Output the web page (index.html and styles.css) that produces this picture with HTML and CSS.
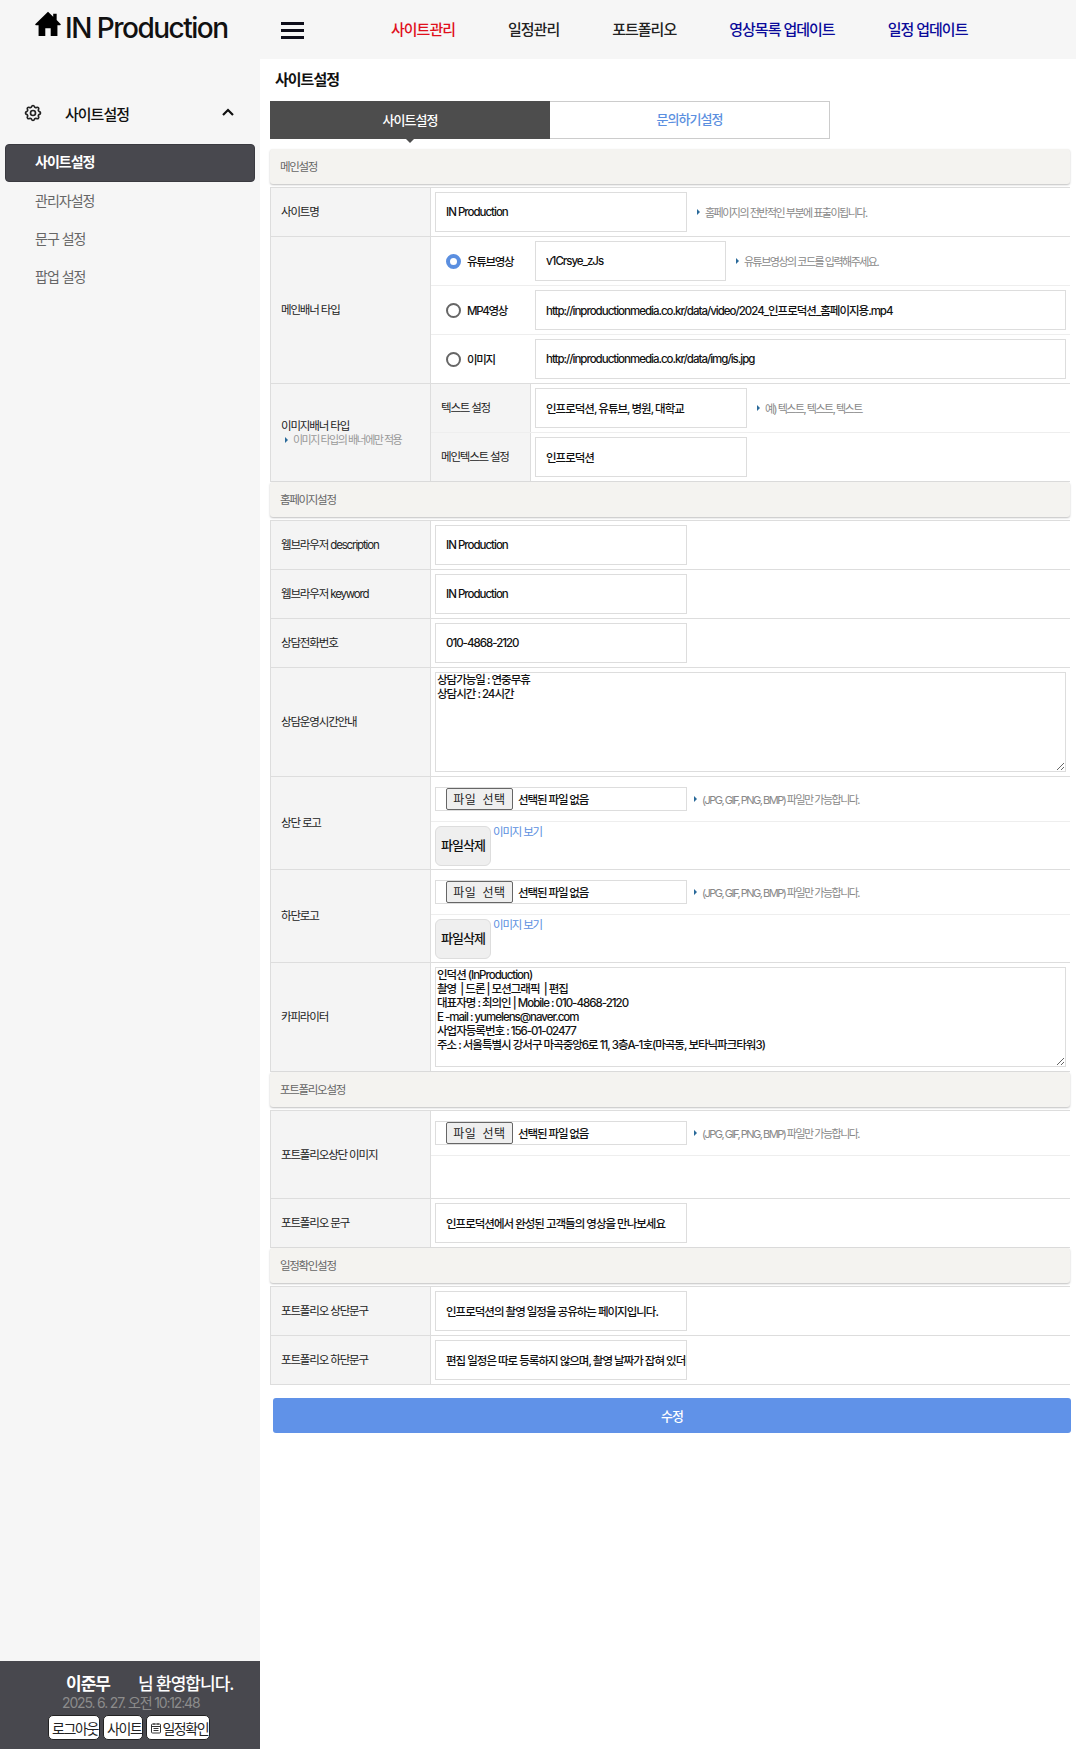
FILE: index.html
```html
<!DOCTYPE html>
<html lang="ko">
<head>
<meta charset="utf-8">
<title>사이트설정</title>
<link rel="stylesheet" href="styles.css">
</head>
<body>
<div class="app">
  <header class="topbar">
    <a class="logo">
      <svg class="logo-icon" viewBox="0 0 24 24"><path d="M12 .8.4 11.900c-.5.6-.1 1.300.6 1.300h2.300V23h6.200v-7h5v7h6.200v-9.800H23c.7 0 1.100-.7.600-1.300L20 8.400V2.500h-3.200v2.900z"/></svg>
      <span>IN Production</span>
    </a>
    <div class="burger"><i></i><i></i><i></i></div>
    <nav class="gnb">
      <a class="red">사이트관리</a>
      <a>일정관리</a>
      <a>포트폴리오</a>
      <a class="navy">영상목록 업데이트</a>
      <a class="navy">일정 업데이트</a>
    </nav>
  </header>
  <div class="body">
    <aside class="sidebar">
      <div class="side-head">
        <svg class="gear" viewBox="0 0 24 24" fill="none" stroke="#222" stroke-width="2"><path d="M10.325 4.317c.426-1.756 2.924-1.756 3.350 0a1.724 1.724 0 0 0 2.573 1.066c1.543-.94 3.310.826 2.370 2.370a1.724 1.724 0 0 0 1.065 2.572c1.756.426 1.756 2.924 0 3.350a1.724 1.724 0 0 0-1.066 2.573c.94 1.543-.826 3.310-2.370 2.370a1.724 1.724 0 0 0-2.572 1.065c-.426 1.756-2.924 1.756-3.350 0a1.724 1.724 0 0 0-2.573-1.066c-1.543.94-3.310-.826-2.370-2.370a1.724 1.724 0 0 0-1.065-2.572c-1.756-.426-1.756-2.924 0-3.350a1.724 1.724 0 0 0 1.066-2.573c-.94-1.543.826-3.310 2.370-2.370 1 .608 2.296.07 2.572-1.065z"/><circle cx="12" cy="12" r="3"/></svg>
        <span class="side-title">사이트설정</span>
        <svg class="chev" viewBox="0 0 12 8" fill="none" stroke="#111" stroke-width="2.200"><path d="M1 7l5-5 5 5"/></svg>
      </div>
      <ul class="side-menu">
        <li class="on">사이트설정</li>
        <li>관리자설정</li>
        <li>문구 설정</li>
        <li>팝업 설정</li>
      </ul>
      <div class="side-foot">
        <div class="welcome"><b>이준무</b><span>님 환영합니다.</span></div>
        <div class="clock">2025. 6. 27. 오전 10:12:48</div>
        <div class="foot-btns">
          <a>로그아웃</a>
          <a>사이트</a>
          <a><svg class="cal" viewBox="0 0 12 12" fill="none" stroke="#333"><rect x="1.500" y="2" width="9" height="9" rx="1"/><path d="M1.500 4.500h9M4 1v2M8 1v2M3.500 6.500h5M3.500 8.500h5" /></svg>일정확인</a>
        </div>
      </div>
    </aside>
    <main class="main">
      <h1 class="page-title">사이트설정</h1>
      <div class="tabs">
        <a class="tab on">사이트설정</a>
        <a class="tab">문의하기설정</a>
      </div>

      <div class="bar">메인설정</div>
      <div class="group">
        <div class="row">
          <div class="label">사이트명</div>
          <div class="cell"><input class="in w252" value="IN Production"><span class="hint">홈페이지의 전반적인 부분에 표출이됩니다.</span></div>
        </div>
        <div class="row">
          <div class="label">메인배너 타입</div>
          <div class="stack">
            <div class="sub">
              <label class="radio-col"><input type="radio" name="t" class="radio" checked>유튜브영상</label>
              <div class="cell"><input class="in w191" value="v1Crsye_zJs"><span class="hint">유튜브영상의 코드를 입력해주세요.</span></div>
            </div>
            <div class="sub">
              <label class="radio-col"><input type="radio" name="t" class="radio">MP4영상</label>
              <div class="cell"><input class="in grow" value="http://inproductionmedia.co.kr/data/video/2024_인프로덕션_홈페이지용.mp4"></div>
            </div>
            <div class="sub">
              <label class="radio-col"><input type="radio" name="t" class="radio">이미지</label>
              <div class="cell"><input class="in grow" value="http://inproductionmedia.co.kr/data/img/is.jpg"></div>
            </div>
          </div>
        </div>
        <div class="row">
          <div class="label">이미지배너 타입<span class="hint block">이미지 타입의 배너에만 적용</span></div>
          <div class="stack">
            <div class="sub">
              <div class="sub-label">텍스트 설정</div>
              <div class="cell"><input class="in w212" value="인프로덕션, 유튜브, 병원, 대학교"><span class="hint">예) 텍스트, 텍스트, 텍스트</span></div>
            </div>
            <div class="sub">
              <div class="sub-label">메인텍스트 설정</div>
              <div class="cell"><input class="in w212" value="인프로덕션"></div>
            </div>
          </div>
        </div>
      </div>

      <div class="bar">홈페이지설정</div>
      <div class="group">
        <div class="row">
          <div class="label">웹브라우저 description</div>
          <div class="cell"><input class="in w252" value="IN Production"></div>
        </div>
        <div class="row">
          <div class="label">웹브라우저 keyword</div>
          <div class="cell"><input class="in w252" value="IN Production"></div>
        </div>
        <div class="row">
          <div class="label">상담전화번호</div>
          <div class="cell"><input class="in w252" value="010-4868-2120"></div>
        </div>
        <div class="row">
          <div class="label">상담운영시간안내</div>
          <div class="cell"><textarea class="area">상담가능일 : 연중무휴
상담시간 : 24시간</textarea></div>
        </div>
        <div class="row">
          <div class="label">상단 로고</div>
          <div class="stack">
            <div class="sub file-row">
              <div class="file"><button class="file-btn" type="button">파일 선택</button><span>선택된 파일 없음</span></div>
              <span class="hint">(JPG, GIF, PNG, BMP) 파일만 가능합니다.</span>
            </div>
            <div class="sub del-row"><button class="del" type="button">파일삭제</button><a class="view">이미지 보기</a></div>
          </div>
        </div>
        <div class="row">
          <div class="label">하단로고</div>
          <div class="stack">
            <div class="sub file-row">
              <div class="file"><button class="file-btn" type="button">파일 선택</button><span>선택된 파일 없음</span></div>
              <span class="hint">(JPG, GIF, PNG, BMP) 파일만 가능합니다.</span>
            </div>
            <div class="sub del-row"><button class="del" type="button">파일삭제</button><a class="view">이미지 보기</a></div>
          </div>
        </div>
        <div class="row">
          <div class="label">카피라이터</div>
          <div class="cell"><textarea class="area">인덕션 (InProduction)
촬영  | 드론 | 모션그래픽  | 편집
대표자명 : 최의인 | Mobile : 010-4868-2120
E -mail : yumelens@naver.com
사업자등록번호 : 156-01-02477
주소 : 서울특별시 강서구 마곡중앙6로 11, 3층A-1호(마곡동, 보타닉파크타워3)</textarea></div>
        </div>
      </div>

      <div class="bar">포트폴리오설정</div>
      <div class="group">
        <div class="row">
          <div class="label">포트폴리오상단 이미지</div>
          <div class="stack">
            <div class="sub file-row">
              <div class="file"><button class="file-btn" type="button">파일 선택</button><span>선택된 파일 없음</span></div>
              <span class="hint">(JPG, GIF, PNG, BMP) 파일만 가능합니다.</span>
            </div>
            <div class="sub empty-row"></div>
          </div>
        </div>
        <div class="row">
          <div class="label">포트폴리오 문구</div>
          <div class="cell"><input class="in w252" value="인프로덕션에서 완성된 고객들의 영상을 만나보세요"></div>
        </div>
      </div>

      <div class="bar">일정확인설정</div>
      <div class="group">
        <div class="row">
          <div class="label">포트폴리오 상단문구</div>
          <div class="cell"><input class="in w252" value="인프로덕션의 촬영 일정을 공유하는 페이지입니다."></div>
        </div>
        <div class="row">
          <div class="label">포트폴리오 하단문구</div>
          <div class="cell"><input class="in w252" value="편집 일정은 따로 등록하지 않으며, 촬영 날짜가 잡혀 있더라도 변경될 수 있습니다."></div>
        </div>
      </div>

      <button class="submit" type="button">수정</button>
    </main>
  </div>
</div>
</body>
</html>
```

FILE: styles.css
```css
* { box-sizing: border-box; }
html, body { margin: 0; padding: 0; height: 100%; }
body {
  font-family: Inter, "Noto Sans CJK KR", sans-serif;
  font-size: 11.5px;
  color: #111;
  background: #fff;
  letter-spacing: -1px;
}
a { text-decoration: none; color: inherit; }
input, textarea, button { font-family: inherit; letter-spacing: inherit; }

.app { display: flex; flex-direction: column; height: 1749px; }

.topbar {
  height: 59px;
  background: #f6f6f6;
  display: flex;
  align-items: center;
  flex: none;
}
.logo {
  width: 281px;
  padding-left: 35px;
  display: flex;
  align-items: flex-start;
  font-size: 28px;
  font-weight: 500;
  letter-spacing: -1.500px;
  color: #111;
  height: 59px;
  padding-top: 11px;
}
.logo-icon { width: 26px; height: 26px; margin: 0 4px 0 0; fill: #000; flex: none; }
.burger { width: 23px; display: flex; flex-direction: column; gap: 4px; flex: none; margin-top: 1px; }
.burger i { display: block; height: 3px; background: #0e0e1a; }
.gnb {
  display: flex;
  gap: 53px;
  margin-left: 87px;
  margin-bottom: 2px;
  font-size: 15px;
  font-weight: 500;
  color: #222;
}
.gnb .red { color: #e0101c; }
.gnb .navy { color: #0a0a9a; }

.body { flex: 1; display: flex; min-height: 0; }

.sidebar {
  width: 260px;
  background: #f6f6f6;
  display: flex;
  flex-direction: column;
  flex: none;
}
.side-head {
  display: flex;
  align-items: center;
  height: 36px;
  margin-top: 36px;
  padding-left: 23px;
  padding-right: 26px;
}
.gear { width: 20px; height: 20px; flex: none; }
.side-title { font-size: 15px; font-weight: 500; margin-left: 22px; flex: 1; color: #111; }
.chev { width: 12px; height: 8px; flex: none; margin-bottom: 2px; }
.side-menu { list-style: none; margin: 13px 0 0; padding: 0 5px; }
.side-menu li {
  height: 38px;
  line-height: 37px;
  padding-left: 30px;
  font-size: 14px;
  color: #666;
}
.side-menu li.on {
  background: #48484e;
  color: #fff;
  font-weight: 700;
  border-radius: 4px;
  border: 1px solid #3a3a40;
  padding-left: 29px;
  line-height: 34px;
}
.side-foot {
  margin-top: auto;
  height: 88px;
  background: #48484e;
  color: #fff;
  display: flex;
  flex-direction: column;
  padding-top: 12px;
}
.welcome { font-size: 17px; line-height: 22px; padding-left: 66px; font-weight: 500; white-space: nowrap; }
.welcome b { font-weight: 700; margin-right: 28px; }
.clock { font-size: 14px; color: #8c8c8c; line-height: 16px; padding-left: 62px; white-space: nowrap; letter-spacing: -1.150px; }
.foot-btns { display: flex; gap: 3px; margin-top: 4px; padding-left: 48px; }
.foot-btns a {
  height: 25px;
  padding: 0 1px 0 3px;
  background: #fff;
  border: 1px solid #222;
  border-radius: 5px;
  color: #222;
  font-size: 14px;
  letter-spacing: -1.400px;
  display: flex;
  align-items: center;
}
.cal { width: 12px; height: 12px; }

.main { flex: 1; padding: 0 6px 0 10px; min-width: 0; }
.page-title {
  margin: 0;
  height: 42px;
  line-height: 42px;
  padding-left: 5px;
  font-size: 15px;
  font-weight: 700;
  color: #111;
}
.tabs { display: flex; width: 560px; height: 38px; margin-bottom: 10px; }
.tab {
  flex: none;
  text-align: center;
  line-height: 35px;
  font-size: 13px;
  font-weight: 500;
  color: #5b8fe0;
  border: 1px solid #ccc;
  border-left: 0;
  width: 280px;
  position: relative;
}
.tab.on {
  background: #4d4d4d;
  color: #fff;
  border: 0;
  line-height: 38px;
}
.tab.on::after {
  content: "";
  position: absolute;
  left: 50%;
  top: 100%;
  margin-left: -4px;
  border: 4px solid transparent;
  border-top-color: #4d4d4d;
}

.bar {
  height: 35px;
  line-height: 36px;
  background: #f4f3f0;
  border-radius: 3px;
  box-shadow: 0 1px 2px rgba(0, 0, 0, .25);
  padding-left: 10px;
  font-size: 11.500px;
  color: #666;
  letter-spacing: -1.300px;
}
.bar + .group { margin-top: 3px; border-top: 1px solid #ddd; }

.row { display: flex; border-bottom: 1px solid #ddd; }
.label {
  width: 161px;
  flex: none;
  background: #f4f4f4;
  border-left: 1px solid #ddd;
  border-right: 1px solid #ddd;
  padding-left: 10px;
  display: flex;
  flex-direction: column;
  justify-content: center;
  font-size: 11.500px;
  color: #222;
  line-height: 14px;
  letter-spacing: -1.150px;
}
.cell { flex: 1; display: flex; align-items: center; padding: 4px; min-width: 0; }
.stack { flex: 1; min-width: 0; }
.sub { display: flex; }
.sub + .sub { border-top: 1px solid #eee; }
.sub-label {
  width: 100px;
  flex: none;
  background: #f4f4f4;
  border-right: 1px solid #ddd;
  padding: 0 0 2px 10px;
  display: flex;
  align-items: center;
  color: #222;
  letter-spacing: -1.200px;
}
.radio-col {
  width: 100px;
  flex: none;
  display: flex;
  align-items: center;
  padding-left: 15px;
  gap: 6px;
  font-weight: 500;
  color: #111;
  letter-spacing: -1.300px;
}
.radio {
  appearance: none;
  width: 15px;
  height: 15px;
  margin: 0;
  border: 2px solid #666;
  border-radius: 50%;
  background: #fff;
}
.radio:checked { border: 4.500px solid #5b8fe0; }

.in {
  height: 40px;
  border: 1px solid #ddd;
  padding: 0 0 0 10px;
  font-size: 11.500px;
  font-weight: 500;
  color: #111;
  background: #fff;
  outline: none;
  letter-spacing: -1px;
}
.w252 { width: 252px; }
.w191 { width: 191px; }
.w212 { width: 212px; }
.grow { flex: 1; min-width: 0; margin-right: 0; }

.hint { color: #888; margin-left: 10px; font-size: 11px; white-space: nowrap; display: inline-flex; align-items: center; letter-spacing: -1.500px; }
.hint::before {
  content: "";
  border-left: 3px solid #2a6a9a;
  border-top: 3.500px solid transparent;
  border-bottom: 3.500px solid transparent;
  margin-right: 5px;
}
.hint.block { margin-left: 4px; display: flex; font-size: 11px; color: #999; }
.file-row .hint { margin-left: 7px; }

.area {
  display: block;
  width: 100%;
  height: 100px;
  border: 1px solid #ddd;
  padding: 0 0 0 1px;
  font-size: 11.500px;
  font-weight: 500;
  line-height: 14px;
  color: #111;
  background: #fff;
  outline: none;
}

.file-row { height: 44px; align-items: center; padding-left: 4px; padding-bottom: 1px; }
.empty-row { height: 43px; }
.file {
  width: 252px;
  height: 24px;
  border: 1px solid #ddd;
  padding-left: 10px;
  display: flex;
  align-items: center;
  gap: 5px;
  font-weight: 500;
  color: #111;
  flex: none;
  letter-spacing: -1.100px;
}
.file-btn {
  width: 67px;
  height: 22px;
  border: 1px solid #666;
  border-radius: 2px;
  background: #efefef;
  font-size: 12px;
  color: #222;
  letter-spacing: .6px;
  word-spacing: 2px;
  padding: 0;
}
.del-row { height: 48px; align-items: flex-start; padding: 4px; gap: 2px; }
.del {
  width: 56px;
  height: 40px;
  background: #efefef;
  border: 1px solid #ddd;
  border-radius: 6px;
  font-size: 13px;
  font-weight: 500;
  color: #111;
  padding: 0 0 4px;
}
.view { color: #5b8fe0; line-height: 14px; margin-top: -1px; letter-spacing: -1.200px; }

.submit {
  display: block;
  width: 798px;
  height: 35px;
  margin: 13px 0 0 3px;
  background: #6092e8;
  border: 0;
  border-radius: 3px;
  color: #fff;
  font-size: 13px;
  font-weight: 500;
}
```
